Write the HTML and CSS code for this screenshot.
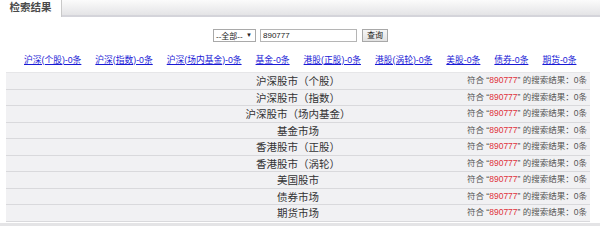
FILE: index.html
```html
<!DOCTYPE html>
<html lang="zh-CN">
<head>
<meta charset="utf-8">
<title>检索结果</title>
<link rel="stylesheet" href="styles.css">
</head>
<body>
<div class="tabbar">
  <div class="tab">检索结果</div>
</div>
<div class="search">
  <div class="select"><span>--全部--</span><span class="arrow">▼</span></div>
  <input class="kw" type="text" value="890777">
  <button class="btn" type="button">查询</button>
</div>
<div class="links">
  <a href="#">沪深(个股)-0条</a>
  <a href="#">沪深(指数)-0条</a>
  <a href="#">沪深(场内基金)-0条</a>
  <a href="#">基金-0条</a>
  <a href="#">港股(正股)-0条</a>
  <a href="#">港股(涡轮)-0条</a>
  <a href="#">美股-0条</a>
  <a href="#">债券-0条</a>
  <a href="#">期货-0条</a>
</div>
<div class="results">
  <div class="row"><span class="title">沪深股市（个股）</span><span class="count">符合 “<em>890777</em>” 的搜索结果：0条</span></div>
  <div class="row"><span class="title">沪深股市（指数）</span><span class="count">符合 “<em>890777</em>” 的搜索结果：0条</span></div>
  <div class="row"><span class="title">沪深股市（场内基金）</span><span class="count">符合 “<em>890777</em>” 的搜索结果：0条</span></div>
  <div class="row"><span class="title">基金市场</span><span class="count">符合 “<em>890777</em>” 的搜索结果：0条</span></div>
  <div class="row"><span class="title">香港股市（正股）</span><span class="count">符合 “<em>890777</em>” 的搜索结果：0条</span></div>
  <div class="row"><span class="title">香港股市（涡轮）</span><span class="count">符合 “<em>890777</em>” 的搜索结果：0条</span></div>
  <div class="row"><span class="title">美国股市</span><span class="count">符合 “<em>890777</em>” 的搜索结果：0条</span></div>
  <div class="row"><span class="title">债券市场</span><span class="count">符合 “<em>890777</em>” 的搜索结果：0条</span></div>
  <div class="row"><span class="title">期货市场</span><span class="count">符合 “<em>890777</em>” 的搜索结果：0条</span></div>
</div>
<div class="bottombar"></div>
</body>
</html>
```

FILE: styles.css
```css
html, body {
  margin: 0;
  padding: 0;
  background: #fff;
}
body {
  width: 600px;
  height: 226px;
  overflow: hidden;
  font-family: "Liberation Sans", "Noto Sans CJK SC", sans-serif;
  color: #333;
  position: relative;
}
.tabbar {
  height: 15px;
  background: linear-gradient(#fbfbfb, #e4e4e6);
  border-bottom: 2px solid #d4d4da;
  display: flex;
}
.tab {
  width: 62px;
  height: 17px;
  background: #fff;
  border-right: 1px solid #c9c9c9;
  box-sizing: border-box;
  font-size: 10.5px;
  line-height: 15px;
  text-align: center;
  color: #4a4a4a;
  font-weight: bold;
}
.search {
  display: flex;
  justify-content: center;
  align-items: center;
  gap: 4px;
  margin-top: 11px;
  height: 14px;
  padding-left: 1px;
}
.select {
  width: 43px;
  height: 13px;
  box-sizing: border-box;
  border: 1px solid #a9a9a9;
  display: flex;
  align-items: center;
  justify-content: space-between;
  font-size: 8px;
  padding: 0 3px 0 2px;
  color: #222;
}
.select .arrow {
  font-size: 6px;
}
.kw {
  width: 97px;
  height: 13px;
  box-sizing: border-box;
  border: 1px solid #b5b5b5;
  font-family: "Liberation Sans", "Noto Sans CJK SC", sans-serif;
  font-size: 8px;
  padding: 0 2px;
  margin: 0;
  color: #222;
  outline: none;
}
.btn {
  width: 26px;
  height: 13px;
  box-sizing: border-box;
  border: 1px solid #a8a8a8;
  background: linear-gradient(#f6f6f6, #e2e2e2);
  font-family: "Liberation Sans", "Noto Sans CJK SC", sans-serif;
  font-size: 8px;
  padding: 0;
  margin-left: 1px;
  color: #222;
  line-height: 11px;
}
.links {
  display: flex;
  gap: 14px;
  padding-left: 24px;
  margin-top: 11px;
  height: 12px;
  align-items: center;
}
.links a {
  color: #1a1ad6;
  font-size: 8.75px;
  text-decoration: underline;
  white-space: nowrap;
}
.results {
  margin: 7px 10px 0 6px;
  border-top: 1px solid #e6e6e8;
}
.row {
  position: relative;
  height: 15.5px;
  background: #f1f1f3;
  border-bottom: 1px solid #d9d9dc;
  display: flex;
  align-items: center;
  justify-content: center;
}
.title {
  font-size: 10.5px;
  color: #333;
  white-space: nowrap;
}
.count {
  position: absolute;
  right: 3px;
  top: 0;
  line-height: 15.5px;
  font-size: 8.5px;
  color: #555;
  white-space: nowrap;
}
.count em {
  font-style: normal;
  color: #e0303a;
}
.bottombar {
  position: absolute;
  left: 0;
  right: 0;
  top: 223px;
  height: 3px;
  background: #e4e4e6;
}
```
